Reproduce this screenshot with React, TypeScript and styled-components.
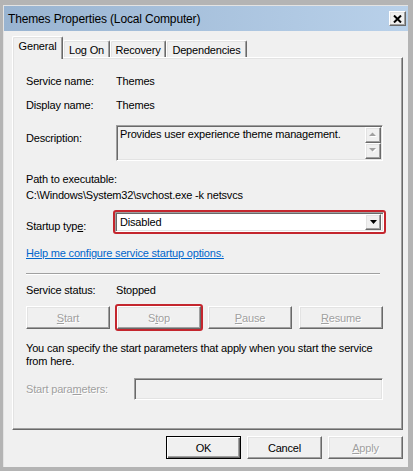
import React from "react";
import styled, { createGlobalStyle, css } from "styled-components";

const GlobalStyle = createGlobalStyle`
  html, body { margin: 0; padding: 0; background: #b4b4b4; }
  body {
    font-family: "Liberation Sans", Arial, sans-serif;
    font-size: 11px;
    letter-spacing: -0.18px;
    color: #000;
  }
  * { box-sizing: border-box; }
`;

const raised = css`
  border: 1px solid;
  border-color: #ffffff #696969 #696969 #ffffff;
  box-shadow: inset -1px -1px 0 #a0a0a0, inset 1px 1px 0 #e3e3e3;
`;

const sunken = css`
  border: 1px solid;
  border-color: #a0a0a0 #ffffff #ffffff #a0a0a0;
  box-shadow: inset 1px 1px 0 #696969, inset -1px -1px 0 #e3e3e3;
`;

const Frame = styled.div`
  width: 413px;
  height: 471px;
  background: #b4b4b4;
  padding: 5px 5px 4px 3px;
`;

const Window = styled.div`
  height: 100%;
  border-top: 1px solid #e3e3e3;
  border-left: 1px solid #e3e3e3;
  display: flex;
  flex-direction: column;
  background: #f0f0f0;
`;

const TitleBar = styled.div`
  height: 25px;
  flex: none;
  display: flex;
  align-items: center;
  justify-content: space-between;
  padding: 0 2px 0 4px;
  background: linear-gradient(to right, #99b4d1, #b9d1ea);
`;

const TitleText = styled.span`
  font-size: 12px;
  letter-spacing: -0.15px;
  color: #000;
`;

const CloseButton = styled.div`
  width: 17px;
  height: 15px;
  background: #f0f0f0;
  ${raised};
  display: flex;
  align-items: center;
  justify-content: center;
`;

const Body = styled.div`
  flex: 1;
  display: flex;
  flex-direction: column;
  padding: 5px 5px 0 8px;
`;

const TabStrip = styled.div`
  display: flex;
  align-items: flex-end;
  height: 21px;
  position: relative;
  z-index: 1;
`;

const Tab = styled.div<{ $w: number; $active?: boolean }>`
  width: ${(p) => p.$w}px;
  height: ${(p) => (p.$active ? 23 : 17)}px;
  margin-bottom: ${(p) => (p.$active ? -2 : 0)}px;
  background: #f0f0f0;
  border-top: 1px solid #ffffff;
  border-left: 1px solid #ffffff;
  border-right: 1px solid #696969;
  border-radius: 2px 2px 0 0;
  box-shadow: inset -1px 0 0 #a0a0a0, inset 1px 1px 0 #e3e3e3;
  display: flex;
  align-items: ${(p) => (p.$active ? "flex-start" : "center")};
  padding-top: ${(p) => (p.$active ? 3 : 1)}px;
  justify-content: center;
  white-space: nowrap;
`;

const Panel = styled.div`
  height: 373px;
  width: 391px;
  flex: none;
  ${raised};
  display: flex;
  flex-direction: column;
  padding: 0 19px 0 13px;
`;

const Row = styled.div<{ $mt: number }>`
  display: flex;
  align-items: flex-start;
  margin-top: ${(p) => p.$mt}px;
  line-height: 14px;
`;

const Label = styled.span<{ $w?: number; $mt?: number; $disabled?: boolean }>`
  width: ${(p) => p.$w ?? 90}px;
  flex: none;
  margin-top: ${(p) => p.$mt ?? 0}px;
  line-height: 14px;
  white-space: nowrap;
  ${(p) =>
    p.$disabled &&
    css`
      color: #a0a0a0;
      text-shadow: 1px 1px 0 #ffffff;
    `}
`;

const Value = styled.span`
  line-height: 14px;
  white-space: nowrap;
`;

const DescBox = styled.div`
  flex: 1;
  height: 36px;
  ${sunken};
  background: #f0f0f0;
  display: flex;
  padding: 1px;
`;

const DescText = styled.div`
  flex: 1;
  padding: 1px 0 0 2px;
  line-height: 13px;
`;

const ScrollCol = styled.div`
  width: 16px;
  display: flex;
  flex-direction: column;
`;

const ScrollBtn = styled.div`
  height: 16px;
  background: #f0f0f0;
  ${raised};
  display: flex;
  align-items: center;
  justify-content: center;
`;

const PathBlock = styled.div<{ $mt: number }>`
  margin-top: ${(p) => p.$mt}px;
  line-height: 16px;
  white-space: nowrap;
`;

const Marked = styled.div`
  position: relative;
  &::after {
    content: "";
    position: absolute;
    inset: -2px;
    border: 2px solid #c4262e;
    border-radius: 3px;
    pointer-events: none;
  }
`;

const ComboWrap = styled(Marked)`
  flex: 1;
  margin-left: -1px;
  margin-right: -1px;
`;

const Combo = styled.div`
  height: 20px;
  ${sunken};
  background: #ffffff;
  display: flex;
  align-items: center;
  padding: 2px 2px 2px 4px;
`;

const ComboText = styled.span`
  flex: 1;
  line-height: 14px;
`;

const DropBtn = styled.div`
  width: 16px;
  height: 16px;
  background: #f0f0f0;
  ${raised};
  display: flex;
  align-items: center;
  justify-content: center;
`;

const Link = styled.a<{ $mt: number }>`
  margin-top: ${(p) => p.$mt}px;
  line-height: 14px;
  color: #0066cc;
  text-decoration: underline;
  align-self: flex-start;
  cursor: pointer;
`;

const Separator = styled.div<{ $mt: number }>`
  margin-top: ${(p) => p.$mt}px;
  margin-right: 3px;
  height: 2px;
  border-top: 1px solid #a0a0a0;
  border-bottom: 1px solid #ffffff;
`;

const ButtonRow = styled.div<{ $mt: number }>`
  margin-top: ${(p) => p.$mt}px;
  display: grid;
  grid-template-columns: repeat(4, 1fr);
  gap: 7px;
`;

const Button = styled.div<{ $disabled?: boolean; $default?: boolean; $w?: number }>`
  height: 23px;
  ${(p) => (p.$w ? `width: ${p.$w}px;` : "")}
  background: #f0f0f0;
  display: flex;
  align-items: center;
  justify-content: center;
  line-height: 14px;
  ${raised};
  ${(p) =>
    p.$default &&
    css`
      border: 1px solid #000000;
      box-shadow: inset 1px 1px 0 #ffffff, inset -1px -1px 0 #696969,
        inset -2px -2px 0 #a0a0a0;
    `}
  ${(p) =>
    p.$disabled &&
    css`
      color: #a0a0a0;
      text-shadow: 1px 1px 0 #ffffff;
    `}
`;

const StopWrap = styled(Marked)`
  display: flex;
  flex-direction: column;
`;

const Paragraph = styled.div<{ $mt: number }>`
  margin-top: ${(p) => p.$mt}px;
  line-height: 13px;
`;

const ParamInput = styled.div`
  flex: 1;
  height: 22px;
  ${sunken};
  background: #f0f0f0;
`;

const ParamRow = styled.div<{ $mt: number }>`
  display: flex;
  align-items: center;
  margin-top: ${(p) => p.$mt}px;
`;

const Footer = styled.div`
  display: flex;
  justify-content: flex-end;
  gap: 6px;
  margin-top: 6px;
  width: 391px;
`;

const U = styled.span`
  text-decoration: underline;
`;

const UpArrow = () => (
  <svg width="8" height="6" viewBox="0 0 8 6">
    <path d="M1 5 L8 5 L4.5 1.5 Z" fill="#ffffff" />
    <path d="M0 4 L7 4 L3.5 0.5 Z" fill="#a0a0a0" />
  </svg>
);

const DownArrow = () => (
  <svg width="8" height="6" viewBox="0 0 8 6">
    <path d="M1 1 L8 1 L4.5 4.5 Z" fill="#ffffff" />
    <path d="M0 0 L7 0 L3.5 3.5 Z" fill="#a0a0a0" />
  </svg>
);

const ComboArrow = () => (
  <svg width="7" height="4" viewBox="0 0 7 4">
    <path d="M0 0 L7 0 L3.5 4 Z" fill="#000000" />
  </svg>
);

const CloseX = () => (
  <svg width="9" height="8" viewBox="0 0 9 8">
    <path d="M1 0.5 L8 7.5 M8 0.5 L1 7.5" stroke="#000" strokeWidth="2" />
  </svg>
);

export default function App() {
  return (
    <>
      <GlobalStyle />
      <Frame>
        <Window>
          <TitleBar>
            <TitleText>Themes Properties (Local Computer)</TitleText>
            <CloseButton>
              <CloseX />
            </CloseButton>
          </TitleBar>
          <Body>
            <TabStrip>
              <Tab $w={51} $active>General</Tab>
              <Tab $w={47}>Log On</Tab>
              <Tab $w={56}>Recovery</Tab>
              <Tab $w={81}>Dependencies</Tab>
            </TabStrip>
            <Panel>
              <Row $mt={16}>
                <Label>Service name:</Label>
                <Value>Themes</Value>
              </Row>
              <Row $mt={10}>
                <Label>Display name:</Label>
                <Value>Themes</Value>
              </Row>
              <Row $mt={13}>
                <Label $mt={6}>Description:</Label>
                <DescBox>
                  <DescText>Provides user experience theme management.</DescText>
                  <ScrollCol>
                    <ScrollBtn>
                      <UpArrow />
                    </ScrollBtn>
                    <ScrollBtn>
                      <DownArrow />
                    </ScrollBtn>
                  </ScrollCol>
                </DescBox>
              </Row>
              <PathBlock $mt={10}>
                Path to executable:
                <br />
                C:\Windows\System32\svchost.exe -k netsvcs
              </PathBlock>
              <Row $mt={9}>
                <Label $mt={7}>
                  Startup typ<U>e</U>:
                </Label>
                <ComboWrap>
                  <Combo>
                    <ComboText>Disabled</ComboText>
                    <DropBtn>
                      <ComboArrow />
                    </DropBtn>
                  </Combo>
                </ComboWrap>
              </Row>
              <Link $mt={13}>Help me configure service startup options.</Link>
              <Separator $mt={13} />
              <Row $mt={8}>
                <Label>Service status:</Label>
                <Value>Stopped</Value>
              </Row>
              <ButtonRow $mt={9}>
                <Button $disabled>
                  <span>
                    <U>S</U>tart
                  </span>
                </Button>
                <StopWrap>
                  <Button $disabled>
                    <span>
                      S<U>t</U>op
                    </span>
                  </Button>
                </StopWrap>
                <Button $disabled>
                  <span>
                    <U>P</U>ause
                  </span>
                </Button>
                <Button $disabled>
                  <span>
                    <U>R</U>esume
                  </span>
                </Button>
              </ButtonRow>
              <Paragraph $mt={13}>
                You can specify the start parameters that apply when you start the service from here.
              </Paragraph>
              <ParamRow $mt={10}>
                <Label $w={108} $disabled>
                  Start para<U>m</U>eters:
                </Label>
                <ParamInput />
              </ParamRow>
            </Panel>
            <Footer>
              <Button $w={75} $default>OK</Button>
              <Button $w={75}>Cancel</Button>
              <Button $w={75} $disabled>
                <span>
                  <U>A</U>pply
                </span>
              </Button>
            </Footer>
          </Body>
        </Window>
      </Frame>
    </>
  );
}
